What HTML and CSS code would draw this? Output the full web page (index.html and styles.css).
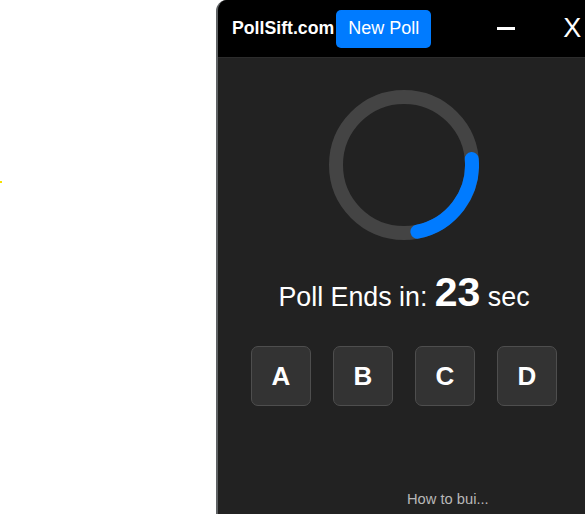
FILE: index.html
```html
<!DOCTYPE html>
<html>
<head>
<meta charset="utf-8">
<link rel="stylesheet" href="styles.css">
</head>
<body>
<span class="stray"></span>
<div class="panel">
  <header class="head">
    <span class="brand">PollSift.com</span>
    <button class="new-poll">New Poll</button>
    <span class="minimize"></span>
    <span class="close">X</span>
  </header>
  <main class="body">
    <svg class="ring" width="150" height="150" viewBox="0 0 150 150">
      <circle cx="75" cy="75" r="68" fill="none" stroke="#444444" stroke-width="14"/>
      <circle cx="75" cy="75" r="68" fill="none" stroke="#007bff" stroke-width="14" stroke-linecap="round" stroke-dasharray="99 400" transform="rotate(-5 75 75)"/>
    </svg>
    <div class="timer">Poll Ends in: <b class="num">23</b> sec</div>
    <div class="options">
      <button class="opt">A</button>
      <button class="opt">B</button>
      <button class="opt">C</button>
      <button class="opt">D</button>
    </div>
    <div class="spacer"></div>
    <div class="foot">How to bui...</div>
  </main>
</div>
</body>
</html>
```
FILE: styles.css
```css
html, body {
  margin: 0;
  padding: 0;
  height: 100%;
  background: #ffffff;
  overflow: hidden;
}
body {
  font-family: "Liberation Sans", Arial, sans-serif;
  position: relative;
}
.stray {
  position: absolute;
  left: 0;
  top: 181px;
  width: 2px;
  height: 2px;
  background: #f5e000;
}
.panel {
  position: absolute;
  left: 216px;
  top: 0;
  width: 372px;
  height: 514px;
  border-left: 2px solid #5f6264;
  border-top-left-radius: 11px;
  background: #222222;
  display: flex;
  flex-direction: column;
  overflow: hidden;
}
.head {
  height: 57px;
  background: #000000;
  display: flex;
  align-items: center;
  padding-left: 14px;
  color: #ffffff;
  flex-shrink: 0;
  border-bottom: 1px solid #2c2c2c;
}
.brand {
  font-weight: bold;
  font-size: 17.7px;
  margin-right: 2px;
}
.new-poll {
  background: #007bff;
  color: #ffffff;
  border: none;
  border-radius: 5px;
  font-family: "Liberation Sans", Arial, sans-serif;
  font-size: 18px;
  width: 95px;
  height: 38px;
  padding: 0;
  margin-top: 0;
}
.minimize {
  width: 18px;
  height: 3px;
  background: #ffffff;
  margin-left: 66px;
}
.close {
  font-size: 27px;
  margin-left: 48px;
  line-height: 1;
}
.body {
  flex: 1;
  display: flex;
  flex-direction: column;
  align-items: center;
  padding-top: 32px;
}
.ring {
  display: block;
}
.timer {
  color: #ffffff;
  font-size: 26.8px;
  margin-top: 29px;
  line-height: 46px;
}
.num {
  font-size: 41px;
  font-weight: bold;
}
.options {
  display: flex;
  gap: 22px;
  margin-top: 26px;
}
.opt {
  width: 60px;
  height: 60px;
  background: #333333;
  border: 1px solid #4e4e4e;
  border-radius: 7px;
  color: #ffffff;
  font-family: "Liberation Sans", Arial, sans-serif;
  font-weight: bold;
  font-size: 26px;
  padding: 0;
}
.spacer {
  flex: 1;
}
.foot {
  align-self: flex-start;
  margin-left: 189px;
  margin-bottom: 7px;
  color: #b8b8b8;
  font-size: 14.7px;
}
```
